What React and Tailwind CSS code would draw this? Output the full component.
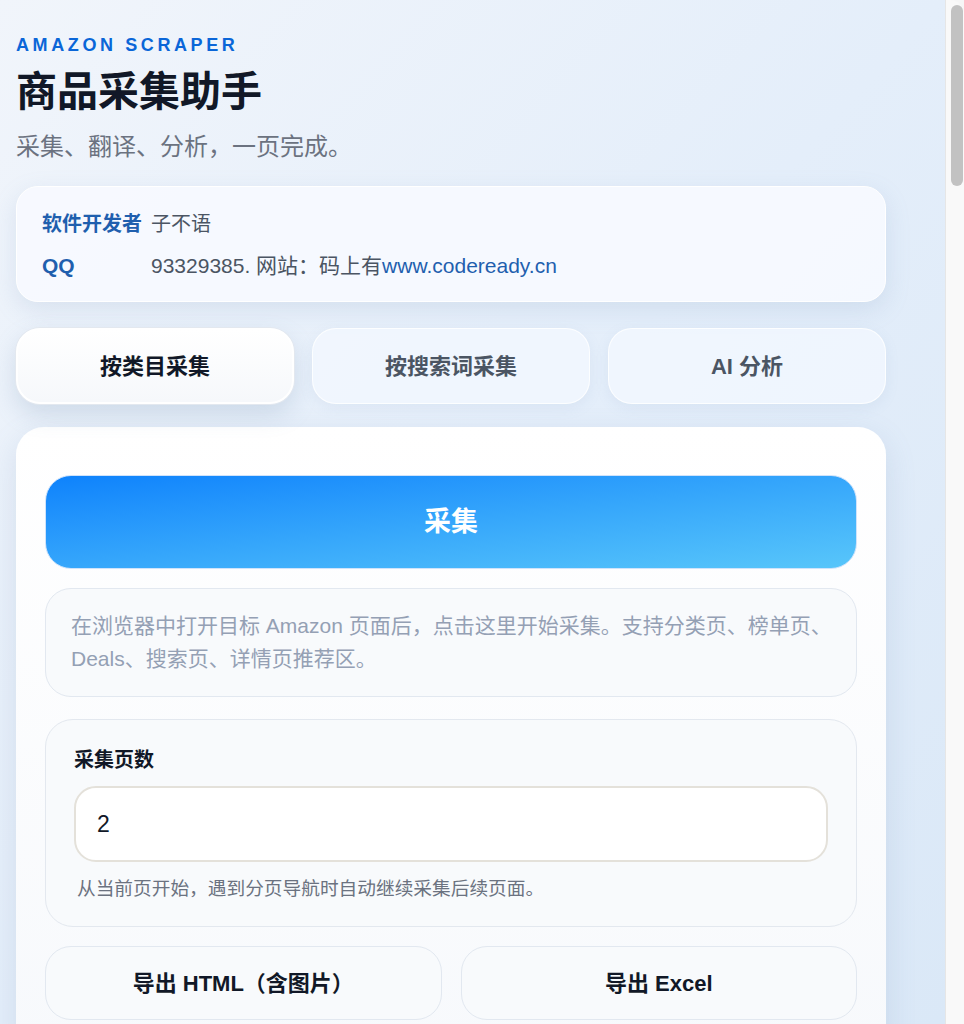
const FONT = { fontFamily: '"Liberation Sans", "Noto Sans CJK SC", sans-serif' };

const TABS = ['按类目采集', '按搜索词采集', 'AI 分析'];

function InfoCard() {
  return (
    <div className="rounded-[22px] bg-[#f7faff]/90 border border-white shadow-[0_8px_24px_rgba(120,150,190,0.18)] px-[25px] pt-[22px] pb-[20px] grid grid-cols-[auto_1fr] gap-x-[9px] gap-y-[12px] text-[20px] leading-[30px]">
      <span className="font-bold text-[#1f5fae]">软件开发者</span>
      <span className="text-[#4b5563]">子不语</span>
      <span className="font-bold text-[#1f5fae] text-[21px]">QQ</span>
      <span className="text-[#4b5563] text-[21px]">
        93329385. 网站：码上有<span className="text-[#1f5fae]">www.codeready.cn</span>
      </span>
    </div>
  );
}

function Tabs({ active = 0 }) {
  return (
    <div className="grid grid-cols-3 gap-[18px] mt-[26px]">
      {TABS.map((t, i) => (
        <button
          key={t}
          className={
            i === active
              ? 'h-[76px] rounded-[24px] bg-gradient-to-b from-white to-[#f6f8fb] border-2 border-white ring-1 ring-[#e3e8ef] shadow-[0_10px_24px_rgba(100,130,170,0.22)] text-[22px] font-bold text-[#111827]'
              : 'h-[76px] rounded-[24px] bg-[#f3f8ff]/80 border border-white/80 shadow-[0_4px_14px_rgba(120,150,190,0.10)] text-[22px] font-bold text-[#4b5563]'
          }
        >
          {t}
        </button>
      ))}
    </div>
  );
}

function PagesField() {
  return (
    <div className="mt-[22px] rounded-[28px] border border-[#e3e8ef] bg-[#f8fafc] px-[28px] pt-[28px] pb-[24px]">
      <div className="text-[20px] font-bold text-[#111827] leading-[24px]">采集页数</div>
      <div className="mt-[14px] h-[76px] rounded-[22px] border-2 border-[#e4e1da] bg-white flex items-center px-[21px] text-[23px] text-[#111827]">
        2
      </div>
      <p className="mt-[14px] pl-[3px] text-[18.7px] leading-[26px] text-[#6b7280]">
        从当前页开始，遇到分页导航时自动继续采集后续页面。
      </p>
    </div>
  );
}

export default function App() {
  return (
    <div style={FONT} className="flex w-[964px] h-[1024px] overflow-hidden bg-[#f6f6f6]">
      <div className="w-[945px] h-full overflow-hidden bg-gradient-to-br from-[#f1f5fb] via-[#e4eefa] to-[#dae8f7] pl-[16px] pr-[59px]">
        <div className="pt-[34px]">
          <div className="text-[18px] font-bold tracking-[0.2em] text-[#0a66d8] leading-[22px]">AMAZON SCRAPER</div>
          <h1 className="mt-[12px] text-[41px] font-bold text-[#111827] leading-[48px]">商品采集助手</h1>
          <p className="mt-[16px] text-[24px] text-[#6b7280] leading-[30px]">采集、翻译、分析，一页完成。</p>
        </div>

        <div className="mt-[24px]">
          <InfoCard />
        </div>

        <Tabs active={0} />

        <div className="mt-[23px] rounded-[28px] bg-gradient-to-b from-white to-[#f7f9fc] shadow-[0_10px_30px_rgba(110,140,180,0.18)] px-[29px] pt-[48px] pb-[40px]">
          <button className="w-full h-[94px] rounded-[26px] border border-[#cfe3fb] bg-gradient-to-br from-[#0d82fc] via-[#35a6fb] to-[#58c6fa] text-white text-[27px] font-bold">
            采集
          </button>

          <div className="mt-[19px] rounded-[26px] border border-[#e2e8f0] bg-[#f8fafc] pl-[25px] pr-[18px] pt-[20px] pb-[21px] text-[21px] leading-[33px] text-[#94a0b4]">
            在浏览器中打开目标 Amazon 页面后，点击这里开始采集。支持分类页、榜单页、Deals、搜索页、详情页推荐区。
          </div>

          <PagesField />

          <div className="mt-[19px] grid grid-cols-2 gap-[19px]">
            <button className="h-[74px] rounded-[26px] border border-[#e2e8f0] bg-[#f8fafc] text-[22px] font-bold text-[#111827]">
              导出 HTML（含图片）
            </button>
            <button className="h-[74px] rounded-[26px] border border-[#e2e8f0] bg-[#f8fafc] text-[22px] font-bold text-[#111827]">
              导出 Excel
            </button>
          </div>
        </div>
      </div>

      <div className="w-[19px] h-full border-l border-[#e6e6e6] bg-[#f9f9f9] rounded-tr-[14px] pt-[5px] pl-[5px]">
        <div className="w-[12px] h-[181px] rounded-full bg-[#c2c2c2]" />
      </div>
    </div>
  );
}
